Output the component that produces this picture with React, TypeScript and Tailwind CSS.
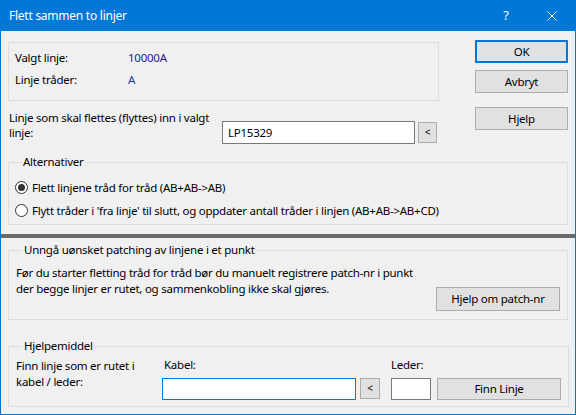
import React from "react";

const font = { fontFamily: '"Noto Sans", "Liberation Sans", sans-serif' };

function Btn({ children, className = "" }: { children: React.ReactNode; className?: string }) {
  return (
    <div
      className={
        "flex items-center justify-center bg-[#e1e1e1] border border-[#adadad] text-black whitespace-nowrap " +
        className
      }
    >
      {children}
    </div>
  );
}

function Radio({ checked }: { checked?: boolean }) {
  return (
    <div className="w-[13px] h-[13px] rounded-full border border-[#333] bg-white flex items-center justify-center shrink-0">
      {checked && <div className="w-[7px] h-[7px] rounded-full bg-[#333]" />}
    </div>
  );
}

export default function App() {
  return (
    <div
      style={font}
      className="w-[576px] h-[415px] bg-[#f0f0f0] border-x border-b border-[#0078d7] flex flex-col text-[11.5px] tracking-[-0.25px] text-black overflow-hidden whitespace-nowrap"
    >
      {/* title bar */}
      <div className="h-[31px] shrink-0 bg-[#0078d7] -mx-px flex items-center text-white">
        <div className="pl-[9px] flex-1 text-[12px]">Flett sammen to linjer</div>
        <div className="w-[46px] flex items-center justify-center text-[13px]">?</div>
        <div className="w-[46px] mr-[1px] flex items-center justify-center">
          <svg width="10" height="10" viewBox="0 0 10 10">
            <path d="M0.5 0.5 L9.5 9.5 M9.5 0.5 L0.5 9.5" stroke="white" strokeWidth="1" />
          </svg>
        </div>
      </div>

      {/* top area */}
      <div className="flex pl-[7px] shrink-0">
        <div className="w-[431px] flex flex-col">
          <div className="mt-[11px] h-[59px] border border-[#dcdcdc] pt-[4px] pl-[6px]">
            <div className="h-[22px] flex items-center">
              <div className="w-[113px]">Valgt linje:</div>
              <div className="text-[#2b1a8c]">10000A</div>
            </div>
            <div className="h-[22px] flex items-center">
              <div className="w-[113px]">Linje tråder:</div>
              <div className="text-[#1f3f9f]">A</div>
            </div>
          </div>
          <div className="flex mt-[9px]">
            <div className="w-[214px] pl-[1px] leading-[15px]">
              Linje som skal flettes (flyttes) inn i valgt
              <br />
              linje:
            </div>
            <div className="mt-[11px] w-[193px] h-[23px] bg-white border border-[#7a7a7a] flex items-center pl-[5px]">
              LP15329
            </div>
            <Btn className="mt-[12px] ml-[3px] w-[19px] h-[21px] text-[10px]">&lt;</Btn>
          </div>
        </div>
        <div className="ml-[36px] w-[93px] flex flex-col">
          <Btn className="mt-[9px] h-[23px] !border-2 !border-[#0078d7]">OK</Btn>
          <Btn className="mt-[7px] h-[23px]">Avbryt</Btn>
          <Btn className="mt-[14px] h-[23px]">Hjelp</Btn>
        </div>
      </div>

      {/* Alternativer */}
      <fieldset className="mx-[7px] mt-[11px] border border-[#dcdcdc] pl-[6px] pb-[2px] shrink-0">
        <legend className="ml-[6px] px-[2px] leading-[14px]">Alternativer</legend>
        <div className="mt-[7px] h-[23px] flex items-center gap-[4px]">
          <Radio checked />
          <span>Flett linjene tråd for tråd (AB+AB-&gt;AB)</span>
        </div>
        <div className="h-[23px] flex items-center gap-[4px]">
          <Radio />
          <span>Flytt tråder i 'fra linje' til slutt, og oppdater antall tråder i linjen (AB+AB-&gt;AB+CD)</span>
        </div>
      </fieldset>

      {/* separator */}
      <div className="mt-[9px] h-[4px] bg-[#6b6b6b] shrink-0" />

      {/* Unngå */}
      <fieldset className="mx-[7px] mt-[5px] border border-[#dcdcdc] pl-[7px] pr-[7px] pb-[8px] shrink-0">
        <legend className="ml-[6px] px-[2px] leading-[14px]">Unngå uønsket patching av linjene i et punkt</legend>
        <div className="flex">
          <div className="flex-1 pt-[8px] leading-[16px]">
            Før du starter fletting tråd for tråd bør du manuelt registrere patch-nr i punkt
            <br />
            der begge linjer er rutet, og sammenkobling ikke skal gjøres.
          </div>
          <Btn className="mt-[30px] w-[124px] h-[24px]">Hjelp om patch-nr</Btn>
        </div>
      </fieldset>

      {/* Hjelpemiddel */}
      <fieldset className="mx-[7px] mt-[19px] border border-[#dcdcdc] pl-[7px] pr-[7px] pb-[6px] shrink-0">
        <legend className="ml-[6px] px-[2px] leading-[14px]">Hjelpemiddel</legend>
        <div className="flex">
          <div className="w-[146px] pt-[5px] leading-[16px]">
            Finn linje som er rutet i
            <br />
            kabel / leder:
          </div>
          <div className="flex flex-col">
            <div className="h-[24px] flex items-center pl-[2px]">Kabel:</div>
            <div className="mt-[1px] w-[194px] h-[22px] bg-white border border-[#0078d7]" />
          </div>
          <Btn className="mt-[25px] ml-[4px] w-[20px] h-[21px] text-[10px]">&lt;</Btn>
          <div className="ml-[11px] flex flex-col">
            <div className="h-[24px] flex items-center">Leder:</div>
            <div className="mt-[1px] w-[40px] h-[22px] bg-white border border-[#7a7a7a]" />
          </div>
          <Btn className="mt-[25px] ml-[6px] w-[124px] h-[22px]">Finn Linje</Btn>
        </div>
      </fieldset>
    </div>
  );
}
